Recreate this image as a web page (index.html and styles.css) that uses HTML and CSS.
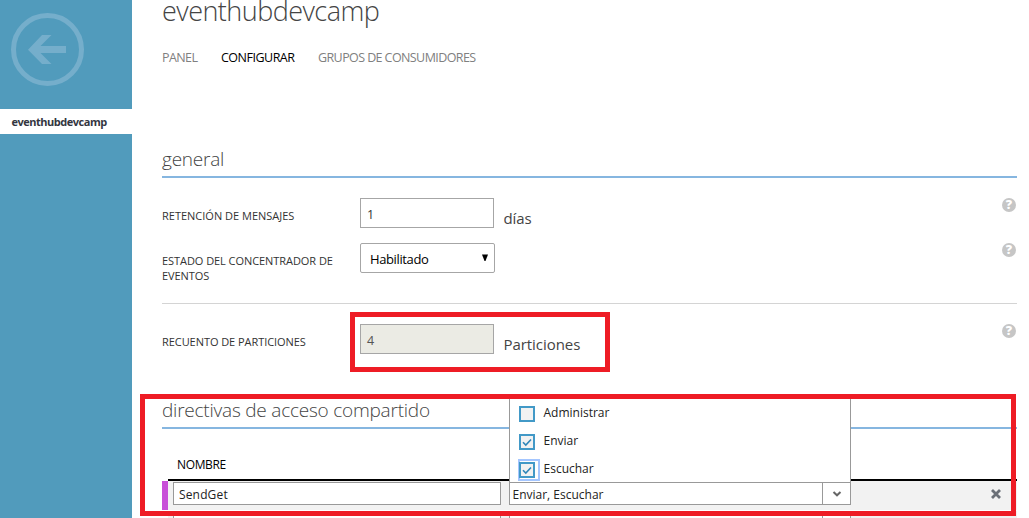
FILE: index.html
```html
<!DOCTYPE html>
<html lang="es">
<head>
<meta charset="utf-8">
<title>eventhubdevcamp</title>
<link rel="stylesheet" href="styles.css">
</head>
<body>
<div class="page">
  <aside class="sidebar">
    <svg class="back" viewBox="0 0 73 73" width="73" height="73">
      <circle cx="36.5" cy="36.500" r="34"/>
      <path d="M17 36.700 31 22h9.500L29.500 33H55v7H29.500L40.500 51H31z"/>
    </svg>
    <div class="side-item">eventhubdevcamp</div>
  </aside>
  <main class="main">
    <h1 class="title">eventhubdevcamp</h1>
    <nav class="tabs">
      <a class="tab tab-panel">PANEL</a>
      <a class="tab tab-config">CONFIGURAR</a>
      <a class="tab tab-groups">GRUPOS DE CONSUMIDORES</a>
    </nav>
    <h2 class="section section-general">general</h2>
    <div class="fields">
      <div class="field">
        <label class="label">RETENCIÓN DE MENSAJES</label>
        <div class="input">1</div><span class="unit">días</span>
        <span class="help">?</span>
      </div>
      <div class="field field-state">
        <label class="label label-tight">ESTADO DEL CONCENTRADOR DE<br>EVENTOS</label>
        <div class="select"><span>Habilitado</span><svg width="8" height="8" viewBox="0 0 8 8"><path d="M1 0.500h6L4.500 7h-1z"/></svg></div>
        <span class="help">?</span>
      </div>
    </div>
    <div class="field field-count">
      <label class="label label-tight">RECUENTO DE PARTICIONES</label>
      <div class="input disabled">4</div><span class="unit">Particiones</span>
      <span class="help">?</span>
    </div>
    <h2 class="section section-policies">directivas de acceso compartido</h2>
    <div class="thead">NOMBRE</div>
    <div class="row">
      <i class="marker"></i>
      <div class="name">SendGet</div>
      <div class="combo">
        <div class="menu">
          <div class="option"><i class="check"></i><span>Administrar</span></div>
          <div class="option"><i class="check"><svg width="12" height="12" viewBox="0 0 12 12"><path d="M2 6.200 4.800 9 10 3.500"/></svg></i><span>Enviar</span></div>
          <div class="option"><i class="check focus"><svg width="12" height="12" viewBox="0 0 12 12"><path d="M2 6.200 4.800 9 10 3.500"/></svg></i><span>Escuchar</span></div>
        </div>
        <div class="value">Enviar, Escuchar</div>
        <div class="arrow"><svg width="10" height="6" viewBox="0 0 10 6"><path d="M1.500 1 5 4.300 8.500 1"/></svg></div>
      </div>
      <svg class="remove" width="10" height="10" viewBox="0 0 10 10"><path d="M1 1l8 8M9 1l-8 8"/></svg>
    </div>
    <div class="row next">
      <i class="marker"></i>
      <div class="name"></div>
      <div class="combo"><div class="value"></div><div class="arrow"></div></div>
    </div>
  </main>
  <div class="mark mark-count"></div>
  <div class="mark mark-policies"></div>
</div>
</body>
</html>
```
FILE: styles.css
```css
* { box-sizing: border-box; }
body { margin: 0; font-family: "Open Sans", "Noto Sans", sans-serif; font-size: 12px; color: #333; background: #fff; }
.page { position: relative; display: flex; width: 1029px; height: 518px; overflow: hidden; }
.sidebar { width: 132px; flex: none; background: #519bbc; }
.back { display: block; margin: 13px 0 23px 11px; }
.back circle { fill: none; stroke: #75aecb; stroke-width: 5; }
.back path { fill: #75aecb; }
.side-item { height: 25px; line-height: 25px; padding-left: 11.500px; background: #fff; font-size: 11px; font-weight: 700; letter-spacing: -0.480px; color: #33363f; white-space: nowrap; }
.main { width: 885px; padding-left: 30px; flex: none; }
h1, h2 { margin: 0; font-weight: 300; color: #444; white-space: nowrap; }
.title { height: 40px; line-height: 22px; font-size: 27px; letter-spacing: -0.540px; }
.tabs { display: flex; gap: 24px; height: 36px; margin-top: 8px; line-height: 20px; font-size: 12.500px; letter-spacing: -0.590px; color: #808080; white-space: nowrap; }
.tab-panel { width: 35px; }
.tab-config { width: 73px; color: #000; letter-spacing: -0.500px; }
.section { height: 32px; border-bottom: 2px solid #86b6e0; line-height: 26px; font-size: 19px; letter-spacing: -0.220px; }
.section-general { margin-top: 62px; }
.fields { height: 126px; padding-top: 20px; border-bottom: 1px solid #d4d4d4; }
.field { display: flex; height: 30px; }
.field-state { margin-top: 15px; }
.field-count { margin-top: 20px; }
.label { width: 198px; padding-top: 10px; line-height: 15px; font-size: 11px; white-space: nowrap; }
.label-tight { letter-spacing: -0.060px; }
.input { width: 134px; height: 30px; border: 1px solid #a6a6a6; padding-left: 6px; line-height: 32px; font-size: 12.500px; }
.disabled { background: #ebebe4; color: #555; }
.unit { margin-left: 9.500px; line-height: 40px; font-size: 15px; letter-spacing: -0.060px; color: #444; white-space: nowrap; }
.select { display: flex; align-items: center; justify-content: space-between; width: 135px; height: 30px; border: 1px solid #a6a6a6; border-radius: 2px; padding: 0 5px 0 9px; line-height: 28px; font-size: 13px; letter-spacing: -0.380px; color: #000; }
.select span { padding-top: 2px; }
.help { width: 14px; height: 14px; margin: 0 1px 0 auto; border-radius: 50%; background: #c6c6c6; color: #fff; font: 800 12.500px/14px "Open Sans", sans-serif; text-align: center; }
.section-policies { margin-top: 43px; }
.thead { height: 52px; margin-left: 6px; padding: 26px 0 0 9px; border-bottom: 2px solid #000; line-height: 20px; letter-spacing: -0.350px; color: #000; }
.row { display: flex; height: 29px; background: #f2f2f2; color: #222; }
.next { margin-top: 1px; }
.marker { width: 6px; background: #c84fd8; }
.next .marker { background: #fff; }
.name { width: 328px; height: 23px; margin: 1px 8px 0 5px; padding-left: 5px; border: 1px solid #999; background: #fff; line-height: 23px; letter-spacing: 0.150px; }
.combo { position: relative; display: flex; width: 342px; height: 23px; margin-top: 1px; border: 1px solid #999; background: #fff; line-height: 23px; }
.value { width: 313px; padding-left: 2.500px; border-right: 1px solid #999; }
.arrow { flex: 1; display: flex; align-items: center; justify-content: center; }
.next .name, .next .combo { margin-top: 4px; }
.menu { position: absolute; left: -1px; bottom: 21px; width: 342px; height: 84px; padding: 1px 9px 0; border: solid #999; border-width: 0 1px 1px; background: #fff; overflow: hidden; }
.option { display: flex; gap: 8.500px; height: 28px; line-height: 26px; }
.check { display: flex; align-items: center; justify-content: center; width: 16px; height: 16px; margin-top: 6px; border: 2px solid #4299c7; background: #f2f2f2; }
.focus { box-shadow: 2px 0 0 1px #fff, 2px 0 0 3px #a4c6ff; }
.check path, .arrow path, .remove path { fill: none; stroke: #2f86b9; stroke-width: 1.600; }
.arrow path { stroke: #666; stroke-width: 2; }
.remove { margin: 8px 16px 0 auto; }
.remove path { stroke: #6b7078; stroke-width: 2.800; }
.mark { position: absolute; border: 5px solid #ee1c25; }
.mark-count { left: 350px; top: 312px; width: 260px; height: 60px; }
.mark-policies { left: 140px; top: 394px; width: 876px; height: 122px; }
```
